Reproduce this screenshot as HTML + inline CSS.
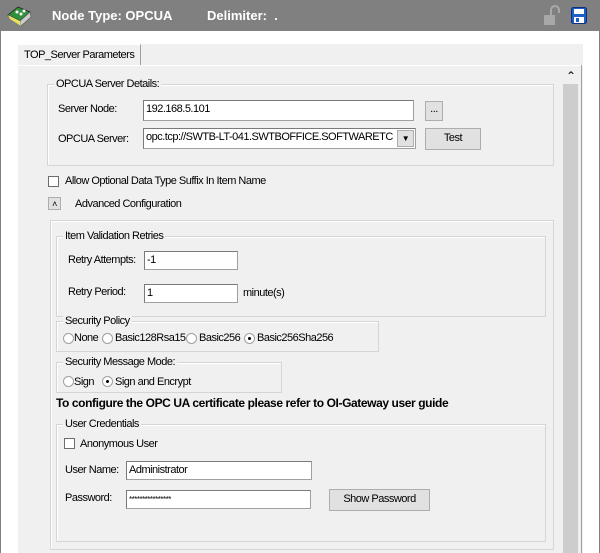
<!DOCTYPE html>
<html><head><style>
*{margin:0;padding:0;box-sizing:border-box}
body{width:600px;height:553px;overflow:hidden;background:#fff;font-family:"Liberation Sans",Arial,sans-serif;font-size:11px;color:#000;position:relative;letter-spacing:-0.5px}
.a{position:absolute}
.t{position:absolute;line-height:12px;white-space:nowrap}
.g{position:absolute;border:1px solid #d5d5d5;box-shadow:inset 1px 1px 0 #fff}
.lg{position:absolute;top:-7px;left:6px;background:#f0f0f0;padding:0 2px;line-height:12px;white-space:nowrap}
.in{position:absolute;background:#fff;border:1px solid #a0a0a0;border-top-color:#7a7a7a;border-left-color:#7a7a7a;padding-left:2px;line-height:17px;white-space:nowrap;overflow:hidden}
.bt{position:absolute;background:#e1e1e1;border:1px solid #adadad;text-align:center;line-height:19px}
.cb{position:absolute;width:11px;height:11px;background:#fff;border:1px solid #6d6d6d}
.rd{position:absolute;width:11px;height:11px;border-radius:50%;background:#fff;border:1px solid #a0a0a0}
.rd.on::after{content:"";position:absolute;left:3px;top:3px;width:3px;height:3px;border-radius:50%;background:#000}
</style></head><body>
<div class="a" style="left:0;top:0;width:600px;height:31px;background:#808080"></div>
<div class="a" style="left:0;top:31px;width:1px;height:522px;background:#808080"></div>
<div class="a" style="left:599px;top:31px;width:1px;height:522px;background:#808080"></div>
<svg class="a" style="left:6px;top:4px" width="28" height="24" viewBox="0 0 28 24"><path d="M2 11 L12 3 L24 8 L14 17Z" fill="#2f8f3a" stroke="#222" stroke-width=".8"/><path d="M14 17 L24 8 L25 13 L15 22Z" fill="#ccc" stroke="#555" stroke-width=".6"/><path d="M2 11 L14 17 L15 22 L4 15Z" fill="#e8e060"/><circle cx="11" cy="8" r="1.5" fill="#fff"/><circle cx="15" cy="10" r="1.5" fill="#fff"/><circle cx="18" cy="7" r="1.5" fill="#fff"/></svg>
<div class="t" style="left:52px;top:10px;color:#fff;font-weight:bold;font-size:13px;letter-spacing:0">Node Type: OPCUA</div>
<div class="t" style="left:207px;top:10px;color:#fff;font-weight:bold;font-size:13px;letter-spacing:0">Delimiter:&nbsp; .</div>
<svg class="a" style="left:542px;top:5px" width="20" height="22" viewBox="0 0 20 22"><path d="M9 10 V5 a4 4 0 0 1 8 0 V8" fill="none" stroke="#a8a8a8" stroke-width="2"/><rect x="2" y="10" width="11" height="10" fill="#a8a8a8"/></svg>
<svg class="a" style="left:571px;top:7px" width="16" height="17" viewBox="0 0 16 17"><rect x="0.5" y="0.5" width="15" height="16" rx="2" fill="#1e5ec8" stroke="#0a2f80"/><rect x="3" y="2" width="10" height="5" fill="#fff"/><rect x="3" y="10" width="10" height="6" fill="#fff"/><rect x="5" y="11" width="3" height="4" fill="#1e5ec8"/></svg>
<div class="a" style="left:18px;top:44px;width:565px;height:509px;background:#f0f0f0"></div>
<div class="a" style="left:18px;top:44px;width:123px;height:22px;background:#f0f0f0;border-right:1px solid #a0a0a0;border-top:1px solid #fff"></div>
<div class="t" style="left:24px;top:49px">TOP_Server Parameters</div>
<div class="a" style="left:18px;top:65px;width:565px;height:1px;background:#fff"></div>
<div class="a" style="left:581px;top:65px;width:1px;height:488px;background:#a0a0a0"></div>
<div class="a" style="left:562px;top:68px;width:18px;height:485px;background:#f0f0f0"></div>
<div class="t" style="left:566px;top:70px;font-size:12px">&#8963;</div>
<div class="a" style="left:563px;top:84px;width:15px;height:469px;background:#cdcdcd"></div>

<div class="g" style="left:47px;top:84px;width:507px;height:82px"><div class="lg">OPCUA Server Details:</div></div>
<div class="t" style="left:58px;top:103px">Server Node:</div>
<div class="in" style="left:143px;top:100px;width:271px;height:21px">192.168.5.101</div>
<div class="bt" style="left:425px;top:101px;width:18px;height:20px;line-height:14px">...</div>
<div class="t" style="left:58px;top:133px">OPCUA Server:</div>
<div class="in" style="left:143px;top:128px;width:273px;height:21px">opc.tcp://SWTB-LT-041.SWTBOFFICE.SOFTWARETC</div>
<div class="a" style="left:397px;top:130px;width:17px;height:17px;background:#e1e1e1;border:1px solid #adadad;font-size:8px;text-align:center;line-height:15px">&#9660;</div>
<div class="bt" style="left:425px;top:128px;width:56px;height:22px">Test</div>

<div class="cb" style="left:48px;top:176px"></div>
<div class="t" style="left:65px;top:175px">Allow Optional Data Type Suffix In Item Name</div>
<div class="bt" style="left:48px;top:197px;width:13px;height:13px;line-height:13px;font-size:9px">&#708;</div>
<div class="t" style="left:75px;top:198px">Advanced Configuration</div>

<div class="g" style="left:50px;top:220px;width:504px;height:330px"></div>
<div class="g" style="left:56px;top:236px;width:490px;height:81px"><div class="lg">Item Validation Retries</div></div>
<div class="t" style="left:68px;top:254px">Retry Attempts:</div>
<div class="in" style="left:144px;top:251px;width:94px;height:19px">-1</div>
<div class="t" style="left:68px;top:286px">Retry Period:</div>
<div class="in" style="left:144px;top:284px;width:94px;height:19px">1</div>
<div class="t" style="left:243px;top:287px">minute(s)</div>

<div class="g" style="left:56px;top:321px;width:323px;height:31px"><div class="lg">Security Policy</div></div>
<div class="rd" style="left:63px;top:333px"></div><div class="t" style="left:74px;top:332px">None</div>
<div class="rd" style="left:102px;top:333px"></div><div class="t" style="left:115px;top:332px">Basic128Rsa15</div>
<div class="rd" style="left:186px;top:333px"></div><div class="t" style="left:199px;top:332px">Basic256</div>
<div class="rd on" style="left:244px;top:333px"></div><div class="t" style="left:257px;top:332px">Basic256Sha256</div>

<div class="g" style="left:56px;top:362px;width:226px;height:31px"><div class="lg">Security Message Mode:</div></div>
<div class="rd" style="left:63px;top:376px"></div><div class="t" style="left:74px;top:376px">Sign</div>
<div class="rd on" style="left:102px;top:376px"></div><div class="t" style="left:115px;top:376px">Sign and Encrypt</div>

<div class="t" style="left:56px;top:397px;font-weight:bold;font-size:12px;letter-spacing:-0.4px">To configure the OPC UA certificate please refer to OI-Gateway user guide</div>

<div class="g" style="left:56px;top:424px;width:490px;height:118px"><div class="lg">User Credentials</div></div>
<div class="cb" style="left:64px;top:438px"></div>
<div class="t" style="left:80px;top:438px">Anonymous User</div>
<div class="t" style="left:65px;top:464px">User Name:</div>
<div class="in" style="left:126px;top:461px;width:186px;height:19px">Administrator</div>
<div class="t" style="left:65px;top:492px">Password:</div>
<div class="in" style="left:126px;top:490px;width:185px;height:19px;font-size:8px">****************</div>
<div class="bt" style="left:329px;top:489px;width:101px;height:22px">Show Password</div>
</body></html>
